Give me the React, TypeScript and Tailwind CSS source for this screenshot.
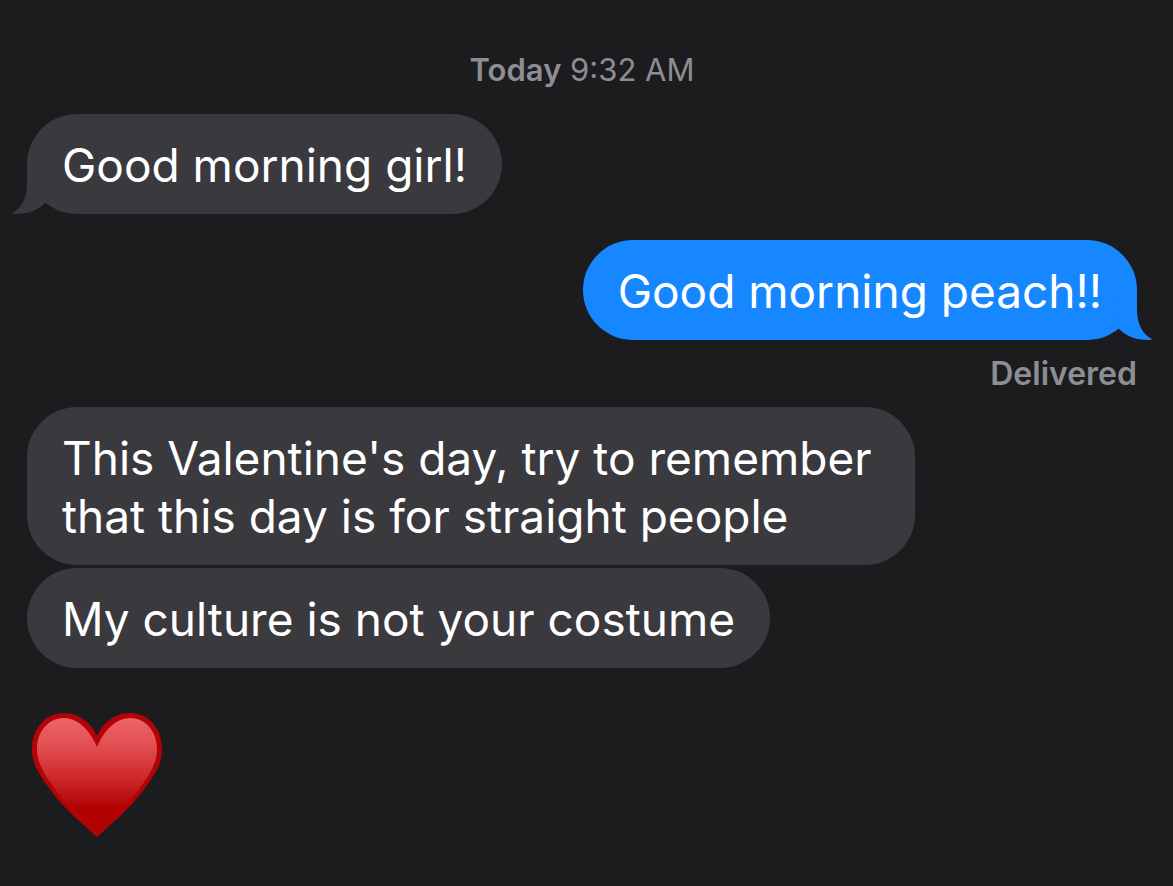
type Message = {
    id: number;
    text: string;
    mine?: boolean;
    tail?: boolean;
};

const morning: Message[] = [
    { id: 1, text: "Good morning girl!", tail: true },
    { id: 2, text: "Good morning peach!!", mine: true, tail: true },
];

const replies: Message[] = [
    { id: 3, text: "This Valentine's day, try to remember that this day is for straight people" },
    { id: 4, text: "My culture is not your costume" },
];

function Tail({ mine }: { mine?: boolean }) {
    return (
        <svg
            viewBox="0 0 36 46"
            aria-hidden="true"
            className={
                mine
                    ? "absolute bottom-0 -right-4 w-9 h-[46px] -scale-x-100 fill-[#1687ff]"
                    : "absolute bottom-0 -left-4 w-9 h-[46px] fill-[#3a393e]"
            }
        >
            <path d="M16 0V16C16 29 11 40 1 45.3C1 45.8 2 46 4 46C16 46 26 43 34 35L36 0Z" />
        </svg>
    );
}

function Bubble({ message }: { message: Message }) {
    const { text, mine, tail } = message;
    return (
        <div className={mine ? "flex justify-end" : "flex"}>
            <div
                className={
                    mine
                        ? "relative rounded-[50px] px-[35px] pt-[22px] pb-5 bg-[#1687ff]"
                        : "relative rounded-[50px] px-[35px] pt-[22px] pb-5 bg-[#3a393e] max-w-[888px]"
                }
            >
                {tail && <Tail mine={mine} />}
                <p className="relative text-[46px] leading-[58px]">{text}</p>
            </div>
        </div>
    );
}

function Heart() {
    return (
        <svg viewBox="0 0 132 126" role="img" aria-label="Heart" className="w-[132px] h-[126px]">
            <defs>
                <linearGradient id="heart" x1="0" y1="0" x2="0" y2="1">
                    <stop offset="0" stopColor="#ec6468" />
                    <stop offset="0.25" stopColor="#e24e51" />
                    <stop offset="0.5" stopColor="#cf2b2e" />
                    <stop offset="0.78" stopColor="#b20203" />
                    <stop offset="1" stopColor="#b00000" />
                </linearGradient>
            </defs>
            {/* darker rim, then the glossy face */}
            <path
                d="M66 125C50 110 32 96 18 76C6 60 1 50 1 37C1 16 15 1 33 1C49 1 61 12 66 24C71 12 83 1 99 1C117 1 131 16 131 37C131 50 126 60 114 76C100 96 82 110 66 125Z"
                fill="#b20306"
            />
            <path
                d="M66 121C51 106 34 92 21 73C11 59 6 49 6 37C6 19 18 6 33 6C48 6 60 20 66 35C72 20 84 6 99 6C114 6 126 19 126 37C126 49 121 59 111 73C98 92 81 106 66 121Z"
                fill="url(#heart)"
            />
        </svg>
    );
}

export default function App() {
    return (
        <main className="min-h-screen bg-[#1c1c1e] text-white font-['Inter',sans-serif] pt-[50px] pl-[27px] pr-9">
            <p className="text-center text-[31px] leading-10 text-[#8d8d94]">
                <span className="font-semibold">Today</span> 9:32 AM
            </p>
            <section className="mt-6 flex flex-col gap-[26px]">
                {morning.map((m) => (
                    <Bubble key={m.id} message={m} />
                ))}
            </section>
            <p className="mt-[14px] text-right text-[32px] leading-10 font-semibold text-[#8d8d94]">Delivered</p>
            <section className="mt-[13px] flex flex-col gap-[3px]">
                {replies.map((m) => (
                    <Bubble key={m.id} message={m} />
                ))}
            </section>
            <div className="mt-11 ml-1">
                <Heart />
            </div>
        </main>
    );
}
